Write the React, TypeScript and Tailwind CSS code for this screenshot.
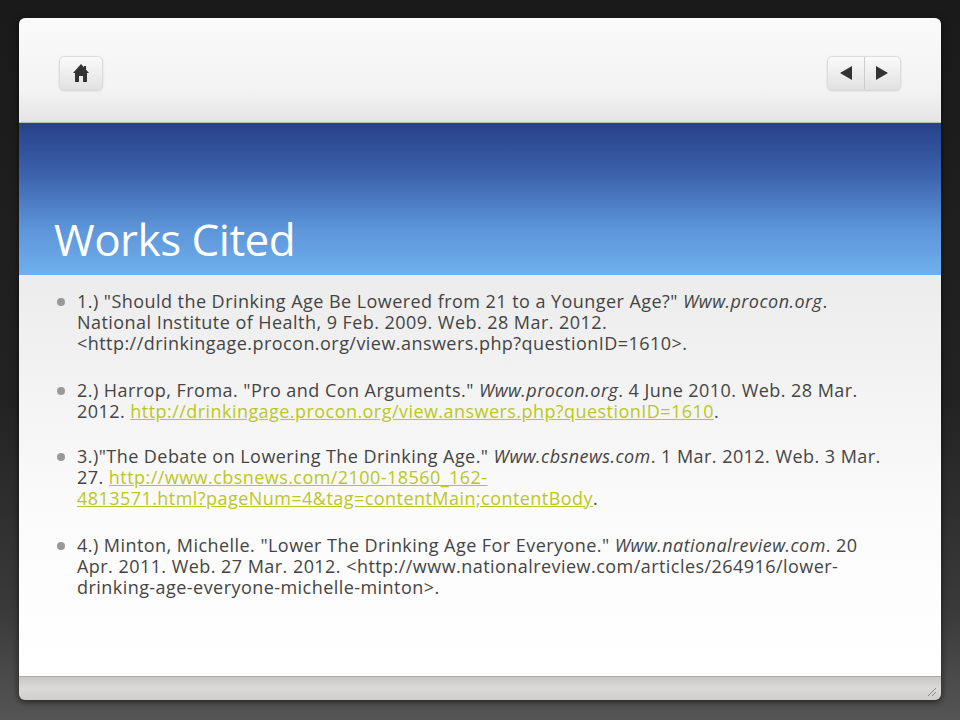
export default function App() {
  const link = "text-[#bac71e] underline";
  return (
    <div className="w-[960px] h-[720px] overflow-hidden bg-[linear-gradient(180deg,#1a1a1a_0%,#222_55%,#3a3a3a_85%,#555_100%)] pt-[18px] px-[19px]" style={{ fontFamily: '"Open Sans", sans-serif' }}>
      <div className="w-[922px] h-[682px] rounded-[6px] overflow-hidden flex flex-col shadow-[0_2px_6px_rgba(0,0,0,0.6)]">
        <div className="h-[105px] bg-[linear-gradient(180deg,#fafafa_0%,#f3f3f3_70%,#e4e4e4_100%)] flex items-start justify-between px-[40px] pt-[38px] border-b border-[#bbb]">
          <div className="w-[44px] h-[34px] rounded-[5px] border border-[#ddd] bg-[linear-gradient(180deg,#fafafa,#e2e2e2)] shadow-[0_1px_2px_rgba(0,0,0,0.15)] flex items-center justify-center">
            <svg width="18" height="20" viewBox="0 0 18 20"><path d="M9 1 L17 10 L15 10 L15 19 L11 19 L11 13 L7 13 L7 19 L3 19 L3 10 L1 10 Z" fill="#333"/><rect x="12" y="3" width="2" height="4" fill="#333"/></svg>
          </div>
          <div className="w-[74px] h-[34px] rounded-[5px] border border-[#ddd] bg-[linear-gradient(180deg,#fafafa,#e2e2e2)] shadow-[0_1px_2px_rgba(0,0,0,0.15)] flex">
            <div className="flex-1 flex items-center justify-center border-r border-[#ccc]">
              <svg width="14" height="16" viewBox="0 0 14 16"><path d="M13 1 L1 8 L13 15 Z" fill="#333"/></svg>
            </div>
            <div className="flex-1 flex items-center justify-center">
              <svg width="14" height="16" viewBox="0 0 14 16"><path d="M1 1 L13 8 L1 15 Z" fill="#333"/></svg>
            </div>
          </div>
        </div>
        <div className="h-[152px] bg-[linear-gradient(180deg,#27418a_0%,#3c64ad_35%,#5d95d9_70%,#6fb0ee_100%)] flex items-end px-[35px] pb-[8px]">
          <h1 className="text-white text-[44px] leading-[56px] tracking-[-0.5px]">Works Cited</h1>
        </div>
        <div className="flex-1 bg-[linear-gradient(180deg,#ececec_0%,#fbfbfb_60%,#fff_100%)] px-[38px] pt-[16px] text-[#444] text-[18px] leading-[21px] tracking-[0.45px] whitespace-nowrap">
          <ul className="flex flex-col">
            <li className="flex gap-[12px]"><span className="w-[8px] h-[8px] rounded-full bg-[#999] mt-[7px] shrink-0"></span>
              <p>1.) "Should the Drinking Age Be Lowered from 21 to a Younger Age?" <i>Www.procon.org</i>.<br/>National Institute of Health, 9 Feb. 2009. Web. 28 Mar. 2012.<br/>&lt;http://drinkingage.procon.org/view.answers.php?questionID=1610&gt;.</p></li>
            <li className="flex gap-[12px] mt-[26px]"><span className="w-[8px] h-[8px] rounded-full bg-[#999] mt-[7px] shrink-0"></span>
              <p>2.) Harrop, Froma. "Pro and Con Arguments." <i>Www.procon.org</i>. 4 June 2010. Web. 28 Mar.<br/>2012. <span className={link}>http://drinkingage.procon.org/view.answers.php?questionID=1610</span>.</p></li>
            <li className="flex gap-[12px] mt-[24px]"><span className="w-[8px] h-[8px] rounded-full bg-[#999] mt-[7px] shrink-0"></span>
              <p>3.)"The Debate on Lowering The Drinking Age." <i>Www.cbsnews.com</i>. 1 Mar. 2012. Web. 3 Mar.<br/>27. <span className={link}>http://www.cbsnews.com/2100-18560_162-</span><br/><span className={link}>4813571.html?pageNum=4&amp;tag=contentMain;contentBody</span>.</p></li>
            <li className="flex gap-[12px] mt-[26px]"><span className="w-[8px] h-[8px] rounded-full bg-[#999] mt-[7px] shrink-0"></span>
              <p>4.) Minton, Michelle. "Lower The Drinking Age For Everyone." <i>Www.nationalreview.com</i>. 20<br/>Apr. 2011. Web. 27 Mar. 2012. &lt;http://www.nationalreview.com/articles/264916/lower-<br/>drinking-age-everyone-michelle-minton&gt;.</p></li>
          </ul>
        </div>
        <div className="h-[24px] bg-[linear-gradient(180deg,#c8c6c6,#dcd9d9_50%,#cfcdcd)] border-t border-[#aaa] flex items-end justify-end pr-[4px] pb-[3px]">
          <svg width="12" height="12" viewBox="0 0 12 12"><path d="M11 3 L3 11 M11 7 L7 11" stroke="#888" strokeWidth="1"/></svg>
        </div>
      </div>
    </div>
  );
}
